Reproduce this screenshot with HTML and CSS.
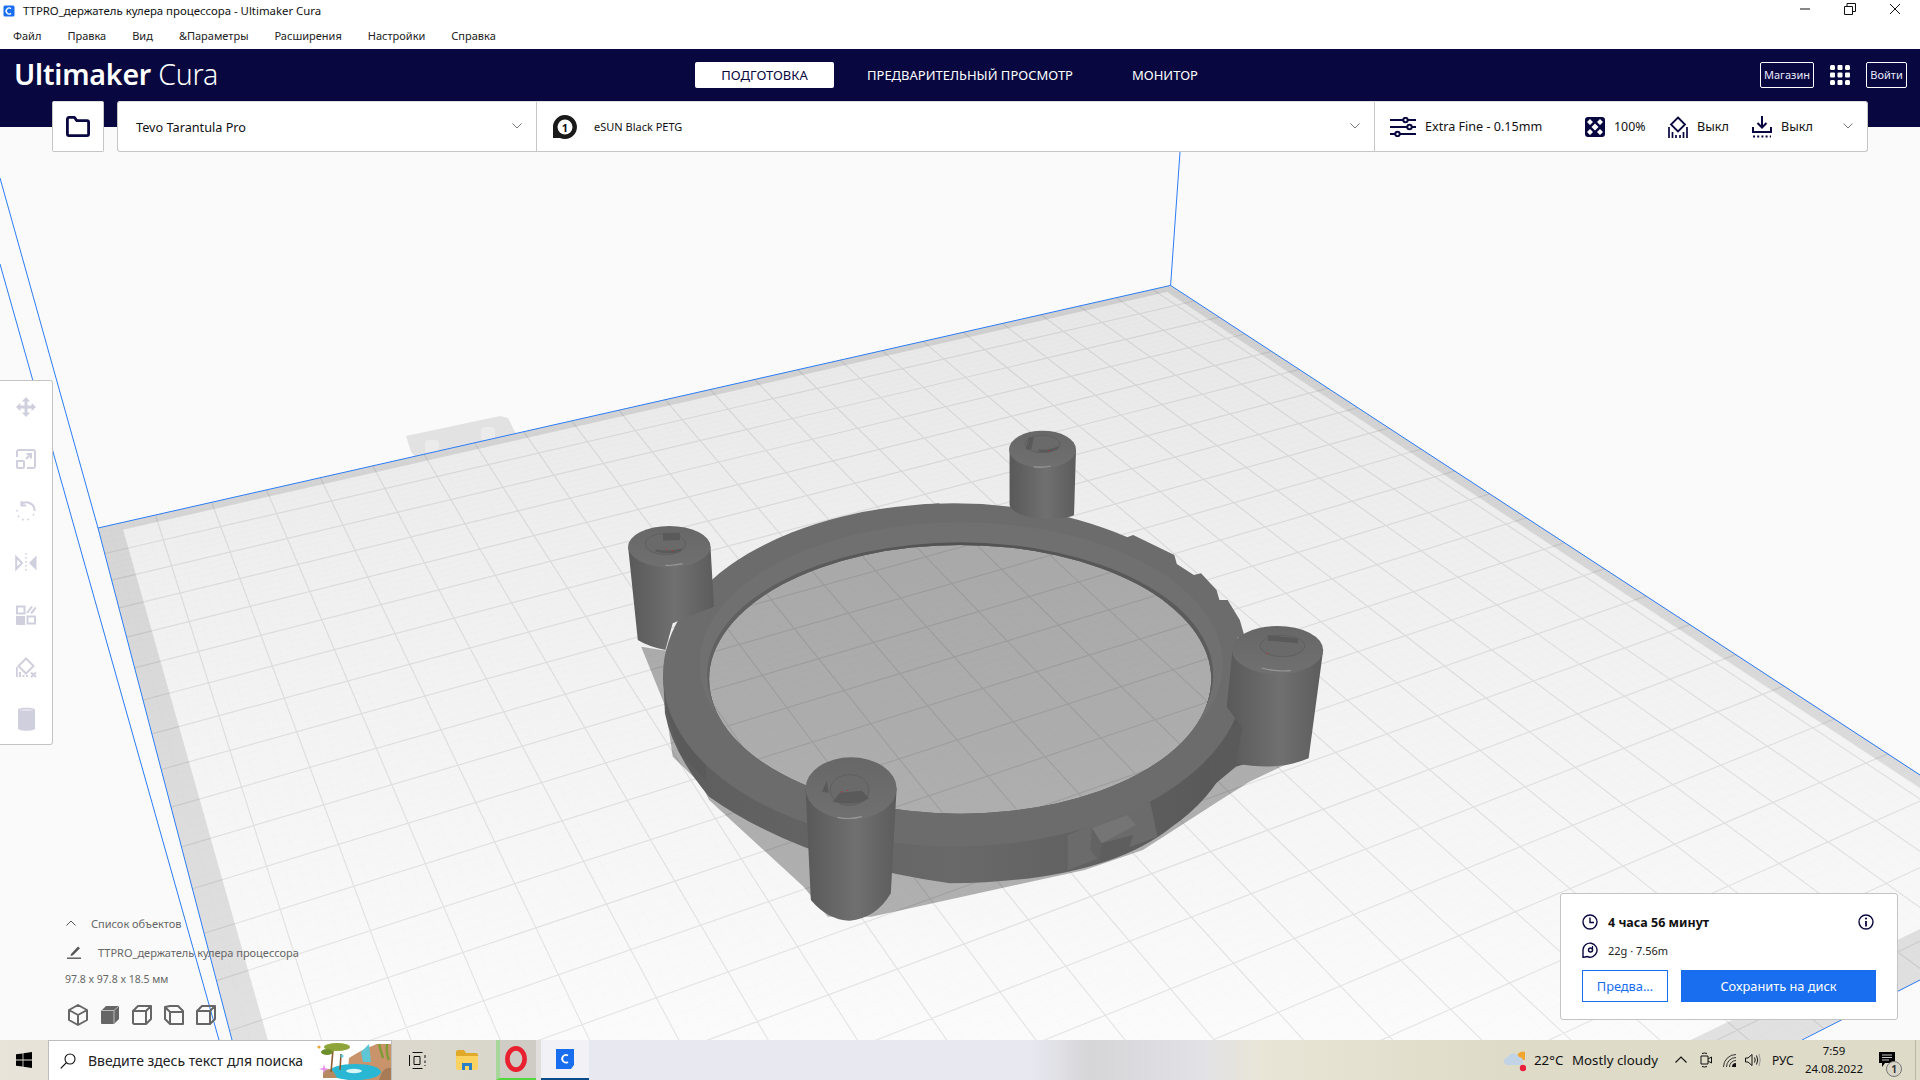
FILE: index.html
```html
<!DOCTYPE html>
<html lang="ru">
<head>
<meta charset="utf-8">
<title>TTPRO_держатель кулера процессора - Ultimaker Cura</title>
<link rel="stylesheet" href="styles.css">
</head>
<body>
<svg class="scene" viewBox="0 0 1920 1080" width="1920" height="1080">
  <defs>
    <linearGradient id="plateFill" gradientUnits="userSpaceOnUse" x1="0" y1="290" x2="0" y2="1040">
      <stop offset="0" stop-color="#e7e7e7"/><stop offset=".35" stop-color="#efefef"/><stop offset="1" stop-color="#fbfbfb"/>
    </linearGradient>
    <linearGradient id="cyl"><stop offset="0" stop-color="#595959"/><stop offset=".55" stop-color="#707070"/><stop offset="1" stop-color="#5c5c5c"/></linearGradient>
    <linearGradient id="wall"><stop offset="0" stop-color="#5d5d5d"/><stop offset=".5" stop-color="#696969"/><stop offset="1" stop-color="#575757"/></linearGradient>
    <linearGradient id="innerWall"><stop offset="0" stop-color="#626262"/><stop offset=".5" stop-color="#525252"/><stop offset="1" stop-color="#5c5c5c"/></linearGradient>
    <linearGradient id="cap" x1="0" y1="0" x2="0" y2="1"><stop offset="0" stop-color="#676767"/><stop offset="1" stop-color="#707070"/></linearGradient>
    <clipPath id="holeCut"><path clip-rule="evenodd" d="M0,0H1568V1560H0Z M225,778 A518,403 0 1 0 1261,778 A518,403 0 1 0 225,778Z"/></clipPath>
  </defs>
  <path class="ghost" d="M406,436 L500,416 L508,418 L516,434 L420,462 L411,452Z"/>
  <rect class="ghost-stub" x="425" y="440" width="14" height="14" rx="4"/>
  <rect class="ghost-stub" x="481" y="427" width="14" height="14" rx="4"/>
  <path id="plate" class="plate"/>
  <path id="band" class="band"/>
  <path id="minor" class="minor"/>
  <path id="major" class="major"/>
  <g class="bluelines">
    <path d="M0,178 L98,528 L232,1040"/>
    <path d="M0,264 L219,1040"/>
    <path d="M98,528 L1170.6,285.4 L1180,152"/>
    <path d="M1170.6,285.4 L1920,775"/>
    <path d="M1802,1040 L1920,980"/>
  </g>
  <g transform="translate(600 420) scale(.4847 .33333)">
    <path class="shade" d="M85,680 L135,860 L150,1010 L210,1095 L225,1140 L420,1400 L470,1490 L560,1490 L1000,1350 L1120,1290 L1280,1140 L1340,1085 L1420,1030 L1300,760 L1180,470 L743,320 L300,470 L170,700Z"/>
    <g clip-path="url(#holeCut)">
      <path class="wallpart" d="M130,765 L134,880 Q150,1000 225,1130 Q420,1330 722,1390 Q1040,1385 1180,1220 Q1290,1110 1320,930 L1330,765Z"/>
    </g>
    <path class="darkpart" d="M135,860 L160,870 L215,1000 L220,1085 L165,1000Z"/>
    <path class="darkpart" d="M1250,950 L1330,905 L1335,1030 L1312,1040 L1262,1100Z"/>
    <path class="panel" d="M965,1245 L1135,1145 L1150,1250 L965,1350Z"/>
    <path class="clip-top" d="M1015,1225 L1088,1185 L1105,1215 L1035,1270Z"/>
    <path class="clip-side" d="M1015,1225 L1035,1270 L1030,1325 L1012,1290Z"/>
    <path class="clip-low" d="M1035,1270 L1100,1245 L1090,1290 L1030,1325Z"/>
    <g clip-path="url(#holeCut)">
      <ellipse class="face" cx="730" cy="765" rx="600" ry="515"/>
      <path class="face" d="M415,335 L455,320 L460,310 L515,292 L570,285 L570,270 L700,250 L700,320 L420,380Z M1100,345 L1185,405 L1190,432 L1225,465 L1240,460 L1272,510 L1278,540 L1295,540 L1320,600 L1332,660 L1200,600 L1000,400Z"/>
      <ellipse class="ledge" cx="745" cy="732" rx="540" ry="425"/>
      <ellipse class="innerwall" cx="743" cy="765" rx="522" ry="398"/>
    </g>
    <path class="cylbody" d="M845,90 L845,255 Q850,285 910,298 Q970,295 978,285 L982,90Z"/>
    <ellipse class="cylcap" cx="913" cy="88" rx="69" ry="56"/>
    <ellipse class="cyltop" cx="913" cy="72" rx="36" ry="26"/>
    <path class="socket" d="M878,88 L885,52 L895,50 L890,88Z M905,95 Q925,102 945,88 L948,78 Q925,92 905,88Z"/>
    <path class="highlight" d="M895,140 Q912,144 930,138"/>
    <path class="cylbody" d="M58,380 L78,660 Q100,680 135,690 L150,610 L235,560 L228,380Z"/>
    <ellipse class="cylcap" cx="143" cy="380" rx="85" ry="62"/>
    <ellipse class="cyltop" cx="135" cy="372" rx="42" ry="32"/>
    <path class="socket" d="M130,340 L165,338 L165,360 L130,362Z M115,395 Q140,405 165,395 L170,385 Q140,398 115,388Z"/>
    <path class="highlight" d="M135,436 Q150,438 170,431"/>
    <path class="cylbody" d="M1305,690 L1293,860 L1325,925 L1312,1030 Q1400,1055 1462,1015 L1492,690Z"/>
    <ellipse class="cylcap" cx="1398" cy="690" rx="94" ry="72"/>
    <ellipse class="cyltop" cx="1408" cy="678" rx="46" ry="32"/>
    <path class="socket" d="M1378,645 L1440,655 L1440,670 L1378,662Z"/>
    <path class="highlight" d="M1365,744 Q1395,756 1425,752"/>
    <path class="cylbody" d="M424,1105 L435,1440 Q470,1500 515,1502 Q570,1495 600,1420 L612,1105Z"/>
    <ellipse class="cylcap" cx="518" cy="1105" rx="94" ry="93"/>
    <ellipse class="cyltop" cx="515" cy="1110" rx="40" ry="46"/>
    <path class="socket" d="M458,1115 L468,1082 L472,1118Z M480,1145 L495,1118 L540,1112 L555,1135 Q530,1160 480,1145Z"/>
    <path class="highlight" d="M490,1192 Q515,1200 540,1190"/>
    <rect class="reddot" x="924" y="90" width="3" height="2"/><rect class="reddot" x="136" y="387" width="3" height="2"/>
    <rect class="reddot" x="148" y="390" width="3" height="2"/><rect class="reddot" x="1375" y="699" width="3" height="2"/>
    <rect class="reddot" x="497" y="1115" width="3" height="2"/><rect class="reddot" x="509" y="1110" width="3" height="2"/>
  </g>
</svg>

<div class="titlebar">
  <svg class="appicon" viewBox="0 0 12 12" width="12" height="12"><rect width="11" height="11" x=".5" y=".5" rx="1.5" fill="#196ef0"/><path d="M8 3.6A3 3 0 1 0 8 8.4" fill="none" stroke="#fff" stroke-width="1.4"/></svg>
  <span class="titletext">TTPRO_держатель кулера процессора - Ultimaker Cura</span>
  <div class="winctl">
    <svg viewBox="0 0 12 12" width="12" height="12"><path d="M1 6H11" stroke="#111" fill="none"/></svg>
    <svg viewBox="0 0 12 12" width="12" height="12"><path d="M.5 3.5H8.5V11.5H.5Z M3 3.5V.5H11.5V8.5H8.5" stroke="#111" fill="none"/></svg>
    <svg viewBox="0 0 12 12" width="12" height="12"><path d="M1 1L11 11M11 1L1 11" stroke="#111" fill="none"/></svg>
  </div>
</div>

<nav class="menubar">
  <span>Файл</span><span>Правка</span><span>Вид</span><span>&amp;Параметры</span><span>Расширения</span><span>Настройки</span><span>Справка</span>
</nav>

<header class="header">
  <div class="navrow">
    <div class="logo"><b>Ultimaker</b> <span>Cura</span></div>
    <div class="stages">
      <span class="stage active">ПОДГОТОВКА</span>
      <span class="stage s2">ПРЕДВАРИТЕЛЬНЫЙ ПРОСМОТР</span>
      <span class="stage s3">МОНИТОР</span>
    </div>
    <div class="account">
      <span class="outline shop">Магазин</span>
      <svg class="apps" viewBox="0 0 20 20" width="20" height="20"><g fill="#fff"><rect x="0" y="0" width="5" height="5" rx="1.5"/><rect x="7.5" y="0" width="5" height="5" rx="1"/><rect x="15" y="0" width="5" height="5" rx="1.5"/><rect x="0" y="7.5" width="5" height="5" rx="1"/><rect x="7.5" y="7.5" width="5" height="5" rx="1"/><rect x="15" y="7.5" width="5" height="5" rx="1"/><rect x="0" y="15" width="5" height="5" rx="1.5"/><rect x="7.5" y="15" width="5" height="5" rx="1"/><rect x="15" y="15" width="5" height="5" rx="1.5"/></g></svg>
      <span class="outline login">Войти</span>
    </div>
  </div>
  <div class="toolrow">
    <div class="folderbtn">
      <svg viewBox="0 0 24 21" width="24" height="21"><path d="M1.4 3A1.6 1.6 0 0 1 3 1.4H8.4L10.8 4.6H21A1.6 1.6 0 0 1 22.6 6.2V18A1.6 1.6 0 0 1 21 19.6H3A1.6 1.6 0 0 1 1.4 18Z" fill="none" stroke="#08073f" stroke-width="2.8" stroke-linejoin="round"/></svg>
    </div>
    <div class="mainbar">
      <div class="seg machine">
        <span class="machname">Tevo Tarantula Pro</span>
        <svg class="chev" viewBox="0 0 10 6" width="10" height="6"><path d="M.5 .5L5 5L9.5 .5" fill="none" stroke="#777"/></svg>
      </div>
      <div class="seg material">
        <svg class="spool" viewBox="0 0 26 26" width="26" height="26"><path d="M1 25V12A12 12 0 1 1 8 24H1Z" fill="#1a1a1a"/><circle cx="13" cy="13" r="7.5" fill="#fff"/><text x="13" y="17.5" text-anchor="middle" class="spoolnum">1</text></svg>
        <span class="matname">eSUN Black PETG</span>
        <svg class="chev" viewBox="0 0 10 6" width="10" height="6"><path d="M.5 .5L5 5L9.5 .5" fill="none" stroke="#777"/></svg>
      </div>
      <div class="seg settings">
        <svg class="ic-profile" viewBox="0 0 26 20" width="26" height="20"><g stroke="#08073f" stroke-width="2" fill="#fff"><path d="M0 3H13M18 3H26M0 10H17M22 10H26M0 17H5M10 17H26"/><circle cx="15.5" cy="3" r="2.2"/><circle cx="19.5" cy="10" r="2.2"/><circle cx="7.5" cy="17" r="2.2"/></g></svg>
        <span class="profile">Extra Fine - 0.15mm</span>
        <svg class="ic-infill" viewBox="0 0 20 20" width="20" height="20"><rect width="20" height="20" rx="3" fill="#08073f"/><g fill="#fff"><path d="M5 2L8 5L5 8L2 5Z M15 2L18 5L15 8L12 5Z M10 6.5L13.5 10L10 13.5L6.5 10Z M5 12L8 15L5 18L2 15Z M15 12L18 15L15 18L12 15Z"/></g></svg>
        <span class="pct">100%</span>
        <svg class="ic-support" viewBox="0 0 20 22" width="20" height="22"><path d="M10 1.5L17 8.5L10 15.5L3 8.5Z" fill="#fff" stroke="#08073f" stroke-width="1.8"/><path d="M1 11V22M4.5 16V22M8 19V22M12 19V22M15.5 16V22M19 11V22" stroke="#08073f" stroke-width="1.7" fill="none"/></svg>
        <span class="off o1">Выкл</span>
        <svg class="ic-adhesion" viewBox="0 0 20 22" width="20" height="22"><path d="M10 0V11M5.5 7L10 11.5L14.5 7" stroke="#08073f" stroke-width="2" fill="none"/><path d="M1 11V16H19V11" stroke="#08073f" stroke-width="2" fill="none"/><path d="M1 20.5H19" stroke="#08073f" stroke-width="1.8" stroke-dasharray="2 2.2" fill="none"/></svg>
        <span class="off o2">Выкл</span>
        <svg class="chev chev3" viewBox="0 0 10 6" width="10" height="6"><path d="M.5 .5L5 5L9.5 .5" fill="none" stroke="#777"/></svg>
      </div>
    </div>
  </div>
</header>

<main class="stagearea">
  <div class="leftcol">
    <div class="toolbox">
      <svg viewBox="0 0 20 20" width="20" height="20"><path class="tool" d="M10 0L14.2 4.4H11.5V8.5H15.6V5.8L20 10L15.6 14.2V11.5H11.5V15.6H14.2L10 20L5.8 15.6H8.5V11.5H4.4V14.2L0 10L4.4 5.8V8.5H8.5V4.4H5.8Z"/></svg>
      <svg viewBox="0 0 20 20" width="20" height="20"><path class="toolstroke" d="M1 8V3A2 2 0 0 1 3 1H17A2 2 0 0 1 19 3V17A2 2 0 0 1 17 19H11M1 12H7A1 1 0 0 1 8 13V18A1 1 0 0 1 7 19H2A1 1 0 0 1 1 18ZM10 10L15 5M10.5 5H15V9.5"/></svg>
      <svg viewBox="0 0 20 20" width="20" height="20"><path class="toolstroke" d="M5 3.5A8.2 8.2 0 0 1 18.6 10M5.5 0V4.5H10"/><path class="tooldots" d="M18 13L16 16M13 18.3L11 19M7.5 19L5.5 18M3 16L1.8 14M1 10.5L1 8.5"/></svg>
      <svg viewBox="0 0 22 20" width="22" height="20"><path class="toolstroke" d="M1.2 4V16L7 10Z"/><path class="tool" d="M21.5 2.5V17.5L14 10Z"/><path class="tooldots" d="M11 0V20"/></svg>
      <svg viewBox="0 0 20 20" width="20" height="20"><path class="toolstroke" d="M1 1.5H8.5V8.5H1ZM11.5 11.5H19V18.5H11.5Z"/><path class="tool" d="M0 11H9V20H1A1 1 0 0 1 0 19Z"/><path class="tooldiag" d="M11 8L16 1.5M15 8.5L20 2.5"/></svg>
      <svg viewBox="0 0 21 21" width="21" height="21"><path class="toolstroke" d="M10 1.5L17.5 9L10 16.5L2.5 9Z"/><path class="tooldiag" d="M.8 10V20M4 15V20M7.5 18V20M11 18V20M15 15.5L20 20M20 15.5L15 20"/></svg>
      <svg viewBox="0 0 17 26" width="17" height="26"><path class="tool" d="M0 3.5C0 1 17 1 17 3.5V22.5C17 25.5 0 25.5 0 22.5Z"/><path class="toolcap" d="M2 4C4 2.6 13 2.6 15 4C13 5.2 4 5.2 2 4Z"/></svg>
    </div>
    <section class="objects">
      <div class="objhead"><svg viewBox="0 0 10 6" width="10" height="6"><path d="M.5 5.5L5 1L9.5 5.5" fill="none" stroke="#555"/></svg><span>Список объектов</span></div>
      <div class="objname"><svg viewBox="0 0 14 14" width="14" height="14"><path d="M4 9L11 1.5L13 3.2L6 10.3L3.5 11Z" fill="#555"/><path d="M0 13.2H14" stroke="#555" stroke-width="1.4"/></svg><span>TTPRO_держатель кулера процессора</span></div>
      <div class="objsize">97.8 x 97.8 x 18.5 мм</div>
      <div class="views">
        <svg viewBox="0 0 20 22" width="20" height="22"><path class="cube" d="M10 1L19 6V16L10 21L1 16V6ZM1 6L10 11L19 6M10 11V21"/></svg>
        <svg viewBox="0 0 20 22" width="20" height="22"><path class="cubefill" d="M1 7L6 2H19V15L14 20H2A1 1 0 0 1 1 19Z"/><path class="cubeline" d="M1.5 6.5H14V20M14 6.5L19 2"/></svg>
        <svg viewBox="0 0 20 22" width="20" height="22"><path class="cube" d="M1 7L6 2H19V15L14 20H2L1 19ZM1 7H14V20M14 7L19 2"/></svg>
        <svg viewBox="0 0 20 22" width="20" height="22"><path class="cube" d="M1 3L6 2H14L19 7V20H6L1 15ZM6 8H19M6 8V20M1 3L6 8"/></svg>
        <svg viewBox="0 0 20 22" width="20" height="22"><path class="cube" d="M1 7L6 2H19V15L14 20H1ZM1 7H14V20M14 7L19 2"/></svg>
      </div>
    </section>
  </div>
  <aside class="action">
    <div class="timerow">
      <svg viewBox="0 0 16 16" width="16" height="16"><circle cx="8" cy="8" r="7" fill="none" stroke="#08073f" stroke-width="1.4"/><path d="M8 3.5V8.5H12" fill="none" stroke="#08073f" stroke-width="1.4"/></svg>
      <strong>4 часа 56 минут</strong>
      <svg class="info" viewBox="0 0 16 16" width="16" height="16"><circle cx="8" cy="8" r="7" fill="none" stroke="#08073f" stroke-width="1.4"/><path d="M8 7V12.5" stroke="#08073f" stroke-width="1.8"/><circle cx="8" cy="4.5" r="1.1" fill="#08073f"/></svg>
    </div>
    <div class="matrow">
      <svg viewBox="0 0 16 16" width="16" height="16"><path d="M1 15.5V8A7 7 0 1 1 5 14.5L1 15.5Z" fill="none" stroke="#08073f" stroke-width="1.4"/><circle cx="8.5" cy="8" r="2" fill="none" stroke="#08073f" stroke-width="1.4"/><path d="M10.5 8V4" stroke="#08073f" stroke-width="1.2"/></svg>
      <span>22g · 7.56m</span>
    </div>
    <div class="btnrow">
      <span class="btn ghostbtn">Предва...</span>
      <span class="btn primary">Сохранить на диск</span>
    </div>
  </aside>
</main>

<footer class="taskbar">
  <div class="startbtn"><svg viewBox="0 0 16 16" width="16" height="16"><path fill="#000" d="M0 2.3L6.6 1.4V7.6H0ZM7.4 1.3L16 0V7.6H7.4ZM0 8.4H6.6V14.6L0 13.7ZM7.4 8.4H16V16L7.4 14.7Z"/></svg></div>
  <div class="searchbox">
    <svg viewBox="0 0 16 16" width="16" height="16"><circle cx="10" cy="6" r="5" fill="none" stroke="#111" stroke-width="1.1"/><path d="M6.4 9.6L.8 15.4" stroke="#111" stroke-width="1.3"/></svg>
    <span>Введите здесь текст для поиска</span>
    <svg class="illus" viewBox="0 0 74 38" width="74" height="38">
      <path d="M30 38L32 16Q44 8 60 2H74V38Z" fill="#c9936b"/>
      <path d="M44 10L52 2L54 20H46Z" fill="#5fc6d6"/>
      <ellipse cx="38" cy="30" rx="26" ry="8" fill="#29b7d3"/>
      <ellipse cx="37" cy="29" rx="8" ry="2.2" fill="#d6f6f8"/>
      <path d="M6 30Q14 22 20 36H6Z" fill="#b58a63"/>
      <path d="M62 38Q66 24 74 26V38Z" fill="#a77b55"/>
      <path d="M14 30L16 8M23 28L24 12" stroke="#8a5b2e" stroke-width="1.6"/>
      <ellipse cx="20" cy="5" rx="13" ry="4" fill="#8fa53a"/>
      <ellipse cx="10" cy="10" rx="6" ry="3" fill="#6c8f2c"/>
      <path d="M62 2Q64 10 66 16M70 2Q69 12 72 18" stroke="#7f9c34" stroke-width="2.4" fill="none"/>
      <path d="M2 12L3 16L7 17L3 18L2 22L1 18L-3 17L1 16Z" fill="#e58ee8" transform="translate(5 10)"/>
      <circle cx="2" cy="5" r="1.6" fill="#eba73a"/><circle cx="25" cy="14" r="1.6" fill="#58c7e0"/>
    </svg>
  </div>
  <div class="tb-task"><svg viewBox="0 0 17 17" width="17" height="17"><path d="M3.5 .5H13.5M3.5 16.5H13.5M5 4.5H11V12.5H5Z M.5 3V14 M16 3V6M16 8.5V11M16 13V14" stroke="#111" fill="none"/></svg></div>
  <div class="tb-explorer"><svg viewBox="0 0 22 20" width="22" height="20"><path d="M0 2A2 2 0 0 1 2 0H8L10 3H20A2 2 0 0 1 22 5V7H0Z" fill="#e0a92a"/><path d="M0 6H22V18A2 2 0 0 1 20 20H2A2 2 0 0 1 0 18Z" fill="#fcd261"/><path d="M6 20V13H16V20H13V16H9V20Z" fill="#2a7fc9"/></svg></div>
  <div class="tb-opera"><svg viewBox="0 0 22 26" width="22" height="26"><ellipse cx="11" cy="13" rx="8.6" ry="10.6" fill="none" stroke="#e8202f" stroke-width="4.6"/></svg></div>
  <div class="tb-cura"><svg viewBox="0 0 18 20" width="18" height="20"><path d="M0 0H18V16L15 20H0Z" fill="#196ef0"/><path d="M12 6.5A3.8 3.8 0 1 0 12 13" fill="none" stroke="#fff" stroke-width="1.8"/></svg></div>
  <div class="tray">
    <svg class="weather" viewBox="0 0 22 24" width="22" height="24"><path d="M13 8A6 6 0 0 1 21 4V12H13Z" fill="#f2a52d"/><path d="M0 14A4.5 4.5 0 0 1 4 9A6 6 0 0 1 15 9A4 4 0 0 1 19 14Q19 16 17 17H3Q0 16 0 14Z" fill="#c3d3e6"/><circle cx="19" cy="20" r="3.2" fill="#e8203c"/></svg>
    <span class="temp">22°C</span>
    <span class="cond">Mostly cloudy</span>
    <svg class="t-chev" viewBox="0 0 12 7" width="12" height="7"><path d="M.5 6.5L6 1L11.5 6.5" fill="none" stroke="#111" stroke-width="1.1"/></svg>
    <svg class="t-meet" viewBox="0 0 12 16" width="12" height="16"><path d="M1 4H8V12H1ZM8 7L11.5 5V11L8 9M2 1.5Q4.5 .5 7 1.5M2 14.5Q4.5 15.5 7 14.5" fill="none" stroke="#111"/></svg>
    <svg class="t-wifi" viewBox="0 0 14 14" width="14" height="14"><path d="M.5 13A12.5 12.5 0 0 1 13 .5M3.5 13A9.5 9.5 0 0 1 13 3.5M6.5 13A6.5 6.5 0 0 1 13 6.5" fill="none" stroke="#333"/><path d="M13 9V13H9A4 4 0 0 1 13 9Z" fill="#111"/></svg>
    <svg class="t-vol" viewBox="0 0 16 14" width="16" height="14"><path d="M.5 5H3L7 1.5V12.5L3 9H.5ZM9.5 4.5Q11 7 9.5 9.5M11.5 2.5Q14 7 11.5 11.5" fill="none" stroke="#111"/><path d="M14 1Q16.5 7 14 13" fill="none" stroke="#999"/></svg>
    <span class="lang">РУС</span>
    <div class="clock"><span>7:59</span><span>24.08.2022</span></div>
    <div class="notif">
      <svg viewBox="0 0 17 16" width="17" height="16"><path d="M0 0H16V11H6L3 15V11H0Z" fill="#000"/><path d="M3 3H13M3 5.5H13M3 8H10" stroke="#ddd" stroke-width=".9"/></svg>
      <span class="badge">1</span>
    </div>
  </div>
</footer>
<script src="script.js"></script>
</body>
</html>
```

FILE: styles.css
```css
* { box-sizing: border-box; }
html, body { margin: 0; padding: 0; }
body {
  width: 1920px; height: 1080px; overflow: hidden;
  display: flex; flex-direction: column;
  position: relative; background: #fafafa;
  font-family: "Noto Sans", "Open Sans", sans-serif; color: #111;
}
.scene { position: absolute; left: 0; top: 0; z-index: 0; }
.ghost { fill: #e2e2e2; }
.ghost-stub { fill: #ebebeb; }
.plate { fill: url(#plateFill); }
.band { fill: #000; fill-opacity: .1; fill-rule: evenodd; }
.minor { fill: none; stroke: #000; stroke-opacity: .018; stroke-width: .7; }
.major { fill: none; stroke: #000; stroke-opacity: .085; stroke-width: 1.2; }
.bluelines path { fill: none; stroke: #2b7cf6; stroke-width: 1; }
.shade { fill: #000; fill-opacity: .29; }
.wallpart { fill: url(#wall); }
.darkpart { fill: #5a5a5a; }
.panel { fill: #6b6b6b; }
.clip-top { fill: #757575; }
.clip-side { fill: #636363; }
.clip-low { fill: #5e5e5e; }
.face { fill: #6c6c6c; }
.ledge { fill: #707070; }
.innerwall { fill: url(#innerWall); }
.cylbody { fill: url(#cyl); }
.cylcap { fill: url(#cap); }
.cyltop { fill: #6a6a6a; stroke: #606060; stroke-width: 1; vector-effect: non-scaling-stroke; }
.socket { fill: #5a5a5a; }
.highlight { fill: none; stroke: #989898; stroke-width: 1.2; vector-effect: non-scaling-stroke; }
.reddot { fill: #e01818; }

.titlebar { position: relative; z-index: 1; height: 24px; background: #fff; display: flex; align-items: center; padding-left: 3px; gap: 8px; flex: none; }
.appicon { flex: none; margin-top: -2px; }
.titletext { font-size: 11.4px; line-height: 20px; color: #111; margin-top: -2px; }
.winctl { margin-left: auto; display: flex; gap: 33px; padding-right: 19px; margin-top: -6px; }

.menubar { position: relative; z-index: 1; height: 25px; background: #fff; display: flex; align-items: center; flex: none; font-size: 11px; color: #222; padding-left: 13px; padding-bottom: 2px; gap: 26px; }

.header { position: relative; z-index: 2; height: 78px; background: #08073f; flex: none; }
.navrow { height: 52px; position: relative; display: flex; align-items: center; padding-left: 14px; }
.logo { width: 681px; flex: none; font-size: 28.5px; line-height: 40px; color: #fff; white-space: pre; margin-top: -2px; letter-spacing: -.2px; }
.logo b { font-weight: 600; }
.logo span { font-weight: 300; }
.stages { display: flex; align-items: center; font-size: 13px; color: #fff; }
.stage { height: 26px; line-height: 26px; }
.stage.active { width: 139px; text-align: center; background: #fff; color: #08073f; border-radius: 2px; }
.s2 { margin-left: 33px; }
.s3 { margin-left: 59px; }
.account { margin-left: auto; display: flex; align-items: center; padding-right: 13px; }
.outline { height: 26px; line-height: 24px; border: 1px solid #fff; border-radius: 2px; color: #e8eaff; font-size: 11px; text-align: center; }
.shop { width: 54px; }
.apps { margin: 0 16px; }
.login { width: 41px; }

.toolrow { display: flex; height: 51px; padding-left: 52px; gap: 13px; }
.folderbtn { width: 52px; background: #fff; border: 1px solid #c6c6c6; border-top-color: #ddd; border-radius: 2px; display: flex; align-items: center; justify-content: center; }
.mainbar { width: 1751px; background: #fff; border: 1px solid #c6c6c6; border-top-color: #ddd; border-radius: 3px; display: flex; }
.seg { display: flex; align-items: center; height: 100%; position: relative; }
.machine { width: 419px; padding-left: 18px; border-right: 1px solid #c6c6c6; font-size: 12.7px; color: #111; }
.material { width: 838px; padding-left: 15px; border-right: 1px solid #c6c6c6; font-size: 11px; }
.settings { flex: 1; font-size: 12.6px; padding-left: 15px; color: #111; }
.machname { flex: 1; }
.matname { flex: 1; margin-left: 16px; }
.chev { margin-right: 14px; margin-top: -2px; flex: none; }
.spool { flex: none; }
.spoolnum { font-size: 11px; font-weight: 700; fill: #111; font-family: "Noto Sans", sans-serif; }
.profile { margin-left: 9px; width: 160px; flex: none; }
.pct { margin-left: 9px; width: 23px; flex: none; font-size: 12.4px; white-space: nowrap; }
.ic-support { margin-left: 31px; flex: none; }
.off { margin-left: 9px; width: 33px; flex: none; }
.ic-adhesion { margin-left: 22px; flex: none; }
.chev3 { margin-left: auto; margin-right: 14px; }

.stagearea { position: relative; z-index: 1; flex: 1; display: flex; justify-content: space-between; min-height: 0; padding: 0 22px 20px 0; }
.leftcol { display: flex; flex-direction: column; padding-top: 253px; }
.toolbox { width: 53px; height: 365px; background: #fff; border: 1px solid #c4c4c4; border-left: 0; border-radius: 0 3px 3px 0; display: grid; grid-auto-rows: 52px; place-items: center; }
.tool { fill: #d0cfde; }
.toolstroke { fill: none; stroke: #d0cfde; stroke-width: 2; }
.tooldots { fill: none; stroke: #d0cfde; stroke-width: 1.6; stroke-dasharray: 1.6 2.4; }
.tooldiag { fill: none; stroke: #d0cfde; stroke-width: 2; }
.toolcap { fill: #e4e3ee; }

.objects { margin-top: auto; margin-bottom: -6px; padding-left: 65px; color: #666; font-size: 11px; display: flex; flex-direction: column; white-space: nowrap; }
.objhead { display: flex; align-items: center; height: 20px; padding-left: 1px; }
.objhead svg { margin-right: 15px; }
.objname { display: flex; align-items: center; height: 20px; margin-top: 9px; padding-left: 2px; }
.objname svg { margin-right: 17px; }
.objsize { height: 20px; line-height: 20px; margin-top: 7px; font-size: 10.5px; }
.views { display: flex; gap: 12px; margin-top: 15px; padding-left: 3px; height: 22px; }
.cube { fill: none; stroke: #666; stroke-width: 2; stroke-linejoin: round; }
.cubefill { fill: #666; }
.cubeline { fill: none; stroke: #bbb; stroke-width: 1; }

.action { align-self: flex-end; width: 338px; height: 127px; background: #fff; border: 1px solid #c4c4c4; border-radius: 3px; padding: 19px 21px 0; display: flex; flex-direction: column; }
.timerow { display: flex; align-items: center; height: 18px; gap: 10px; font-size: 12.5px; color: #111; }
.timerow strong { font-weight: 700; flex: 1; }
.info { margin-right: 2px; }
.matrow { display: flex; align-items: center; height: 18px; gap: 10px; margin-top: 10px; font-size: 11px; color: #222; }
.btnrow { display: flex; gap: 13px; margin-top: 11px; }
.btn { height: 32px; line-height: 30px; text-align: center; font-size: 12.8px; border: 1px solid #196ef0; }
.ghostbtn { width: 86px; background: #fff; color: #196ef0; }
.primary { width: 195px; background: #196ef0; color: #fff; }

.taskbar { position: relative; z-index: 2; height: 40px; flex: none; display: flex; align-items: stretch;
  background: linear-gradient(90deg, #e9e4da 0, #dcd8cd 400px, #d9d6cc 490px, #e8e8f0 590px, #e8e8f1 1030px, #d6d6d8 1090px, #d9d9dc 1120px, #e2e2e6 1200px, #e9e5d6 1265px, #dedbc8 1500px, #dedbc8 1920px); }
.startbtn { width: 48px; display: flex; align-items: center; justify-content: center; padding-bottom: 1px; }
.searchbox { width: 344px; background: #fff; border: 1px solid #bdbdbd; border-bottom: 0; display: flex; align-items: center; padding-left: 11px; font-size: 14px; color: #222; position: relative; overflow: hidden; }
.searchbox > span { margin-left: 12px; white-space: nowrap; }
.illus { position: absolute; right: 0; top: 1px; }
.tb-task { width: 50px; display: flex; align-items: center; justify-content: center; }
.tb-explorer { width: 54px; display: flex; align-items: center; justify-content: center; padding-right: 4px; }
.tb-opera { width: 40px; background: #cfccc6; border-left: 4px solid #a7d69a; border-bottom: 2px solid #52d83c; padding-right: 4px; display: flex; align-items: center; justify-content: center; }
.tb-cura { width: 48px; margin-left: 5px; background: #f2f2f6; border-bottom: 2px solid #0b4b8a; display: flex; align-items: center; justify-content: center; }
.tray { margin-left: auto; margin-right: 4px; display: flex; align-items: center; font-size: 13.3px; color: #111; position: relative; border-right: 1px solid #b9b6a8; }
.weather { flex: none; margin-right: 8px; }
.temp { width: 38px; }
.cond { width: 103px; }
.t-chev { margin-right: 13px; margin-top: -2px; }
.t-meet { margin-right: 11px; margin-top: -1px; }
.t-wifi { margin-right: 8px; margin-top: 1px; }
.t-vol { margin-right: 11px; }
.lang { font-size: 12px; width: 32px; }
.clock { display: flex; flex-direction: column; align-items: center; width: 60px; font-size: 11.4px; line-height: 18px; margin-top: -1px; }
.notif { width: 24px; margin-left: 15px; margin-right: 12px; position: relative; display: flex; align-items: center; }
.badge { position: absolute; left: 7px; top: 9px; width: 16px; height: 16px; border-radius: 50%; background: #d9d6c8; border: 1px solid #777; color: #333; font-size: 10px; line-height: 14px; text-align: center; font-weight: 700; }
```

FILE: script.js
```js
// Projects the 235 x 235 mm build plate onto the screen and draws its grid.
(function () {
  var P = [[98, 528], [1170.6, 285.4], [2099, 891], [414, 1734]];
  var x0 = P[0][0], y0 = P[0][1], x1 = P[1][0], y1 = P[1][1], x2 = P[2][0], y2 = P[2][1], x3 = P[3][0], y3 = P[3][1];
  var dx1 = x1 - x2, dx2 = x3 - x2, dy1 = y1 - y2, dy2 = y3 - y2;
  var sx = x0 - x1 + x2 - x3, sy = y0 - y1 + y2 - y3;
  var den = dx1 * dy2 - dx2 * dy1;
  var g = (sx * dy2 - dx2 * sy) / den, h = (dx1 * sy - sx * dy1) / den;
  var a = x1 - x0 + g * x1, b = x3 - x0 + h * x3, d = y1 - y0 + g * y1, e = y3 - y0 + h * y3;
  function m(u, v) {
    var w = g * u + h * v + 1;
    return ((a * u + b * v + x0) / w).toFixed(1) + ',' + ((d * u + e * v + y0) / w).toFixed(1);
  }
  function region(u0, v0, u1, v1) {
    return 'M' + m(u0, v0) + 'L' + m(u1, v0) + 'L' + m(u1, v1) + 'L' + m(u0, v1) + 'Z';
  }
  function lines(step, skip) {
    var s = '', t;
    for (var i = 1; i * step < 235; i++) {
      if (skip && i % skip === 0) continue;
      t = i * step / 235;
      s += 'M' + m(t, 0) + 'L' + m(t, 1) + 'M' + m(0, t) + 'L' + m(1, t);
    }
    return s;
  }
  document.getElementById('plate').setAttribute('d', region(0, 0, 1, 1));
  document.getElementById('band').setAttribute('d', region(0, 0, 1, 1) + region(0.017, 0.012, 0.988, 0.972));
  document.getElementById('minor').setAttribute('d', lines(2, 5));
  document.getElementById('major').setAttribute('d', lines(10));
})();
```
